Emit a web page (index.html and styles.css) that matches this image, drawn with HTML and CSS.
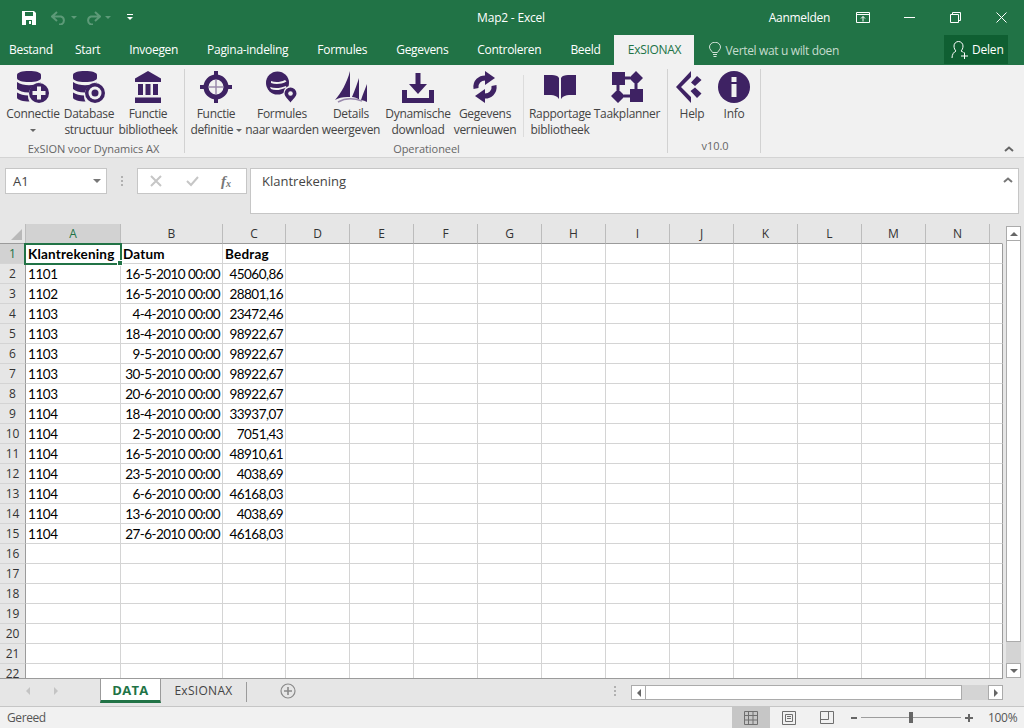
FILE: index.html
```html
<!DOCTYPE html>
<html lang="nl">
<head>
<meta charset="utf-8">
<title>Map2 - Excel</title>
<link rel="stylesheet" href="styles.css">
</head>
<body>
<div class="app">
  <header class="titlebar">
    <div class="qat">
      <svg class="q-save" width="16" height="16" viewBox="0 0 16 16"><path class="w" d="M1 1h12l2 2v12H1z"/><path class="g" d="M4 2h8v4H4zM5 10h6v5H5z"/><path class="w" d="M8 11h2v3H8z"/></svg>
      <svg class="q-undo" width="16" height="14" viewBox="0 0 16 14"><path class="fade" d="M6 1 1 5.500 6 10M1.500 5.500H10a4.200 4.200 0 0 1 0 8H8"/></svg>
      <span class="caret c-fade"></span>
      <svg class="q-redo" width="16" height="14" viewBox="0 0 16 14"><path class="fade" d="M10 1l5 4.500L10 10M14.500 5.500H6a4.200 4.200 0 0 0 0 8h2"/></svg>
      <span class="caret c-fade"></span>
      <span class="q-more"></span>
    </div>
    <div class="doc-title">Map2 - Excel</div>
    <div class="win">
      <span class="signin">Aanmelden</span>
      <svg class="w-display" width="14" height="12" viewBox="0 0 14 12"><path class="ln" d="M.5 .5h13v10H.5zM.5 2.500h13M7 9.500V4.500M5 6.500l2-2 2 2"/></svg>
      <svg class="w-min" width="11" height="11" viewBox="0 0 11 11"><path class="ln" d="M0 5.500h11"/></svg>
      <svg class="w-rest" width="11" height="11" viewBox="0 0 11 11"><path class="ln" d="M.5 2.500h8v8h-8zM2.500 2.500v-2h8v8h-2"/></svg>
      <svg class="w-close" width="11" height="11" viewBox="0 0 11 11"><path class="ln" d="M.5 .5l10 10M10.500 .5l-10 10"/></svg>
    </div>
  </header>

  <nav class="tabs">
    <span class="tab t-file">Bestand</span>
    <span class="tab">Start</span>
    <span class="tab">Invoegen</span>
    <span class="tab">Pagina-indeling</span>
    <span class="tab">Formules</span>
    <span class="tab">Gegevens</span>
    <span class="tab">Controleren</span>
    <span class="tab">Beeld</span>
    <span class="tab active">ExSIONAX</span>
    <span class="tellme">
      <svg width="12" height="16" viewBox="0 0 12 16"><path class="ln2" d="M3.500 10.500C2.500 8.500 .5 7.500 .5 5a5.500 4.800 0 0 1 11 0c0 2.500-2 3.500-3 5.500zM4 12.500h4M4.500 14.500h3"/></svg>
      Vertel wat u wilt doen
    </span>
    <span class="share">
      <svg width="18" height="18" viewBox="0 0 18 18"><path class="ln" d="M1 17c0-4 2-6 4-7-1-1-2-2.500-2-5a4.500 4.500 0 0 1 9 0c0 2.500-1 4-2 5 1 .4 2 1 2.500 1.500M10 15h7M13.500 11.500v6.500"/></svg>
      Delen
    </span>
  </nav>

  <section class="ribbon">
    <div class="group g-a">
      <div class="items">
        <div class="item w60">
          <svg class="ic" viewBox="0 0 32 32"><path d="M0 4C0 1.500 5 0 12 0s12 1.500 12 4v3c0 2.500-5 4-12 4S0 9.500 0 7z"/><path d="M0 11c3 2.500 8 3.200 12 3.200s9-.7 12-3.200v.5C18 12 13 16 12 21.500 6 21.300 2 20 0 18z"/><path d="M0 21.500c3 2 7 3 11 3 0 2 .3 4 1.500 6C6.500 30.500 0 29 0 26.500z"/><circle cx="22" cy="22" r="10"/><path class="hole" d="M20 15.500h4V20h4.500v4H24v4.500h-4V24h-4.500v-4H20z"/></svg>
          <span class="lab">Connectie</span>
          <span class="lab"><i class="caret"></i></span>
        </div>
        <div class="item w52">
          <svg class="ic" viewBox="0 0 32 32"><path d="M0 4C0 1.500 5 0 12 0s12 1.500 12 4v3c0 2.500-5 4-12 4S0 9.500 0 7z"/><path d="M0 11c3 2.500 8 3.200 12 3.200s9-.7 12-3.200v.5C18 12 13 16 12 21.500 6 21.300 2 20 0 18z"/><path d="M0 21.500c3 2 7 3 11 3 0 2 .3 4 1.500 6C6.500 30.500 0 29 0 26.500z"/><circle cx="22" cy="22" r="10"/><circle class="hole" cx="22" cy="22" r="6.500"/><circle cx="22" cy="22" r="3.500"/></svg>
          <span class="lab">Database</span>
          <span class="lab">structuur</span>
        </div>
        <div class="item w66">
          <svg class="ic" viewBox="0 0 32 32"><path d="M16 0l13 7.500V11H3V7.500z"/><path d="M6 13h5v11H6zM13.500 13h5v11h-5zM21 13h5v11h-5zM3 26.500h26V32H3z"/></svg>
          <span class="lab">Functie</span>
          <span class="lab">bibliotheek</span>
        </div>
      </div>
      <div class="glabel">ExSION voor Dynamics AX</div>
    </div>

    <div class="group g-b">
      <div class="items">
        <div class="item w60">
          <svg class="ic" viewBox="0 0 32 32"><path class="thin" d="M16 9v14M9 16h14"/><circle class="ring" cx="16" cy="16" r="10"/><path d="M14 0h4v7h-4zM14 25h4v7h-4zM0 14h7v4H0zM25 14h7v4h-7z"/></svg>
          <span class="lab">Functie</span>
          <span class="lab">definitie <i class="caret"></i></span>
        </div>
        <div class="item w72">
          <svg class="ic" viewBox="0 0 32 32"><circle cx="11.500" cy="12" r="11.500"/><path class="hole" d="M5 10c4 1.500 9 1.500 14-1l1.500 1.500C15 13.500 9 13.500 5 12zM4 16c5 2 11 1 16-1l.5 1.500C15 19 9 20 5 18z"/><path class="pinbg" d="M24.500 15a7 7 0 0 1 7 7c0 4-4.500 7-7 10-2.500-3-7-6-7-10a7 7 0 0 1 7-7z"/><path d="M24.500 16.500a6 6 0 0 1 6 6c0 3-3.800 5.800-6 9-2.200-3.200-6-6-6-9a6 6 0 0 1 6-6z"/><circle class="hole" cx="24.500" cy="22.500" r="2.300"/></svg>
          <span class="lab">Formules</span>
          <span class="lab">naar waarden</span>
        </div>
        <div class="item w66">
          <svg class="ic" viewBox="0 0 32 32"><path d="M0 29C6 22 12 12 15 0v26C9 25.500 4 26.500 0 29zM17 26C20 19 22.500 12 24 7v21.500c-2-1.300-4.500-2.200-7-2.500zM26 29c1.700-5 4-11 6-16v18c-1.700-.9-3.800-1.600-6-2z"/><path class="thin" d="M3 31c7-4 16-4 24-1"/></svg>
          <span class="lab">Details</span>
          <span class="lab">weergeven</span>
        </div>
        <div class="item w68">
          <svg class="ic" viewBox="0 0 32 32"><path d="M0 19h5v8h22v-8h5v13H0zM13.500 2h5v11H25l-9 10-9-10h6.500z"/></svg>
          <span class="lab">Dynamische</span>
          <span class="lab">download</span>
        </div>
        <div class="item w66">
          <svg class="ic" viewBox="0 0 32 32"><path class="arc" d="M7 17.500C6 11 11 6.500 17 7"/><path d="M16 0l10 7-10 7z"/><g class="flip"><path class="arc" d="M7 17.500C6 11 11 6.500 17 7"/><path d="M16 0l10 7-10 7z"/></g></svg>
          <span class="lab">Gegevens</span>
          <span class="lab">vernieuwen</span>
        </div>
        <div class="subsep"></div>
        <div class="item w62">
          <svg class="ic" viewBox="0 0 32 32"><path d="M0 4h8c3 0 6 .7 7 3v21c-2-3-5-4-8-4H0zM32 4h-8c-3 0-6 .7-7 3v21c2-3 5-4 8-4h7z"/></svg>
          <span class="lab">Rapportage</span>
          <span class="lab">bibliotheek</span>
        </div>
        <div class="item w72">
          <svg class="ic" viewBox="0 0 32 32"><path d="M1 1h13v13H1zM25 0l7 7-7 7-7-7zM19 18h13v13H19zM7 18l7 7-7 7-7-7z"/><path d="M14 5.500h5v3h-5zM23.500 13h3v6h-3zM13 23.500h7v3h-7zM5.500 13h3v6h-3z"/></svg>
          <span class="lab">Taakplanner</span>
        </div>
      </div>
      <div class="glabel">Operationeel</div>
    </div>

    <div class="group g-c">
      <div class="items">
        <div class="item w44">
          <svg class="ic" viewBox="0 0 32 32"><path d="M15 0v6L5 16l10 10v6L0 16zM21 5l4.500 4-6.500 6-4-3.500zM19 16.500l6.500 6-4.500 4.500-6.500-7z"/></svg>
          <span class="lab">Help</span>
        </div>
        <div class="item w40">
          <svg class="ic" viewBox="0 0 32 32"><circle cx="16" cy="16" r="16"/><path class="hole" d="M13.500 6h5v5h-5zM13.500 13h5v13h-5z"/></svg>
          <span class="lab">Info</span>
        </div>
      </div>
      <div class="glabel">v10.0</div>
    </div>
    <svg class="collapse" width="10" height="6" viewBox="0 0 10 6"><path d="M1 5l4-3.500L9 5" /></svg>
  </section>

  <section class="fbar">
    <div class="namebox"><span>A1</span><i class="caret c-grey"></i></div>
    <div class="fdots"><i></i><i></i><i></i></div>
    <div class="fbtns">
      <svg width="12" height="12" viewBox="0 0 12 12"><path class="mute" d="M1 1l10 10M11 1L1 11"/></svg>
      <svg width="13" height="12" viewBox="0 0 13 12"><path class="mute" d="M1 6l4 4 7-8"/></svg>
      <span class="fx">f<sub>x</sub></span>
    </div>
    <div class="finput"><span>Klantrekening</span><svg width="10" height="6" viewBox="0 0 10 6"><path class="chev" d="M1 5l4-3.500L9 5"/></svg></div>
  </section>

  <main class="work">
    <div class="sheet">
      <table class="grid">
        <colgroup><col class="c0"><col class="ca"><col class="cb"><col class="cc"><col class="cn"><col class="cn"><col class="cn"><col class="cn"><col class="cn"><col class="cn"><col class="cn"><col class="cn"><col class="cn"><col class="cn"><col class="cn"><col class="cz"></colgroup>
        <thead>
          <tr><th class="corner"><span class="tri"></span></th><th class="sel">A</th><th>B</th><th>C</th><th>D</th><th>E</th><th>F</th><th>G</th><th>H</th><th>I</th><th>J</th><th>K</th><th>L</th><th>M</th><th>N</th><th></th></tr>
        </thead>
        <tbody>
          <tr><th class="sel">1</th><td class="b cur">Klantrekening<i></i></td><td class="b">Datum</td><td class="b">Bedrag</td><td></td><td></td><td></td><td></td><td></td><td></td><td></td><td></td><td></td><td></td><td></td><td></td></tr>
          <tr><th>2</th><td>1101</td><td class="r">16-5-2010 00:00</td><td class="r">45060,86</td><td></td><td></td><td></td><td></td><td></td><td></td><td></td><td></td><td></td><td></td><td></td><td></td></tr>
          <tr><th>3</th><td>1102</td><td class="r">16-5-2010 00:00</td><td class="r">28801,16</td><td></td><td></td><td></td><td></td><td></td><td></td><td></td><td></td><td></td><td></td><td></td><td></td></tr>
          <tr><th>4</th><td>1103</td><td class="r">4-4-2010 00:00</td><td class="r">23472,46</td><td></td><td></td><td></td><td></td><td></td><td></td><td></td><td></td><td></td><td></td><td></td><td></td></tr>
          <tr><th>5</th><td>1103</td><td class="r">18-4-2010 00:00</td><td class="r">98922,67</td><td></td><td></td><td></td><td></td><td></td><td></td><td></td><td></td><td></td><td></td><td></td><td></td></tr>
          <tr><th>6</th><td>1103</td><td class="r">9-5-2010 00:00</td><td class="r">98922,67</td><td></td><td></td><td></td><td></td><td></td><td></td><td></td><td></td><td></td><td></td><td></td><td></td></tr>
          <tr><th>7</th><td>1103</td><td class="r">30-5-2010 00:00</td><td class="r">98922,67</td><td></td><td></td><td></td><td></td><td></td><td></td><td></td><td></td><td></td><td></td><td></td><td></td></tr>
          <tr><th>8</th><td>1103</td><td class="r">20-6-2010 00:00</td><td class="r">98922,67</td><td></td><td></td><td></td><td></td><td></td><td></td><td></td><td></td><td></td><td></td><td></td><td></td></tr>
          <tr><th>9</th><td>1104</td><td class="r">18-4-2010 00:00</td><td class="r">33937,07</td><td></td><td></td><td></td><td></td><td></td><td></td><td></td><td></td><td></td><td></td><td></td><td></td></tr>
          <tr><th>10</th><td>1104</td><td class="r">2-5-2010 00:00</td><td class="r">7051,43</td><td></td><td></td><td></td><td></td><td></td><td></td><td></td><td></td><td></td><td></td><td></td><td></td></tr>
          <tr><th>11</th><td>1104</td><td class="r">16-5-2010 00:00</td><td class="r">48910,61</td><td></td><td></td><td></td><td></td><td></td><td></td><td></td><td></td><td></td><td></td><td></td><td></td></tr>
          <tr><th>12</th><td>1104</td><td class="r">23-5-2010 00:00</td><td class="r">4038,69</td><td></td><td></td><td></td><td></td><td></td><td></td><td></td><td></td><td></td><td></td><td></td><td></td></tr>
          <tr><th>13</th><td>1104</td><td class="r">6-6-2010 00:00</td><td class="r">46168,03</td><td></td><td></td><td></td><td></td><td></td><td></td><td></td><td></td><td></td><td></td><td></td><td></td></tr>
          <tr><th>14</th><td>1104</td><td class="r">13-6-2010 00:00</td><td class="r">4038,69</td><td></td><td></td><td></td><td></td><td></td><td></td><td></td><td></td><td></td><td></td><td></td><td></td></tr>
          <tr><th>15</th><td>1104</td><td class="r">27-6-2010 00:00</td><td class="r">46168,03</td><td></td><td></td><td></td><td></td><td></td><td></td><td></td><td></td><td></td><td></td><td></td><td></td></tr>
          <tr><th>16</th><td></td><td></td><td></td><td></td><td></td><td></td><td></td><td></td><td></td><td></td><td></td><td></td><td></td><td></td><td></td></tr>
          <tr><th>17</th><td></td><td></td><td></td><td></td><td></td><td></td><td></td><td></td><td></td><td></td><td></td><td></td><td></td><td></td><td></td></tr>
          <tr><th>18</th><td></td><td></td><td></td><td></td><td></td><td></td><td></td><td></td><td></td><td></td><td></td><td></td><td></td><td></td><td></td></tr>
          <tr><th>19</th><td></td><td></td><td></td><td></td><td></td><td></td><td></td><td></td><td></td><td></td><td></td><td></td><td></td><td></td><td></td></tr>
          <tr><th>20</th><td></td><td></td><td></td><td></td><td></td><td></td><td></td><td></td><td></td><td></td><td></td><td></td><td></td><td></td><td></td></tr>
          <tr><th>21</th><td></td><td></td><td></td><td></td><td></td><td></td><td></td><td></td><td></td><td></td><td></td><td></td><td></td><td></td><td></td></tr>
          <tr><th>22</th><td></td><td></td><td></td><td></td><td></td><td></td><td></td><td></td><td></td><td></td><td></td><td></td><td></td><td></td><td></td></tr>
        </tbody>
      </table>
    </div>
    <div class="vscroll">
      <div class="sb-btn"><i class="ar-up"></i></div>
      <div class="sb-thumb"></div>
      <div class="sb-track"></div>
      <div class="sb-btn"><i class="ar-down"></i></div>
    </div>
  </main>

  <section class="sheetbar">
    <div class="nav"><i class="nl"></i><i class="nr"></i></div>
    <div class="stab on">DATA</div>
    <div class="stab">ExSIONAX</div>
    <div class="stab-sep"></div>
    <svg class="addsheet" width="16" height="16" viewBox="0 0 16 16"><circle class="addc" cx="8" cy="8" r="7"/><path class="addp" d="M8 4v8M4 8h8"/></svg>
    <div class="fdots sb-dots"><i></i><i></i><i></i></div>
    <div class="hscroll">
      <div class="sb-btn"><i class="ar-left"></i></div>
      <div class="sb-thumb"></div>
      <div class="sb-track"></div>
      <div class="sb-btn"><i class="ar-right"></i></div>
    </div>
  </section>

  <footer class="status">
    <span class="ready">Gereed</span>
    <div class="views">
      <span class="view on"><svg width="14" height="14" viewBox="0 0 14 14"><path class="vw" d="M.5 .5h13v13H.5zM.5 4.500h13M.5 9h13M4.500 .5v13M9 .5v13"/></svg></span>
      <span class="view"><svg width="14" height="14" viewBox="0 0 14 14"><path class="vw" d="M.5 .5h13v13H.5zM3.500 3.500h7v7h-7zM5 5.500h4M5 7.500h4"/></svg></span>
      <span class="view"><svg width="14" height="13" viewBox="0 0 14 13"><path class="vw" d="M.5 .5h13v12H.5zM.5 8.500h8v-8"/></svg></span>
    </div>
    <div class="zoom">
      <i class="z-minus"></i>
      <div class="z-line"><i class="z-thumb"></i></div>
      <i class="z-plus"></i>
    </div>
    <span class="pct">100%</span>
  </footer>
</div>
</body>
</html>
```
FILE: styles.css
```css
* { box-sizing: border-box; }
html, body { margin: 0; padding: 0; }
body { width: 1024px; height: 728px; overflow: hidden; background: #e6e6e6; font-family: "Open Sans", "Noto Sans", sans-serif; font-size: 12px; color: #444; }
.app { display: flex; flex-direction: column; width: 1024px; height: 728px; }

/* title bar */
.titlebar { flex: 0 0 35px; display: flex; align-items: center; background: #217346; color: #fff; position: relative; }
.qat { display: flex; align-items: center; padding-left: 21px; width: 300px; }
.qat .w { fill: #fff; }
.qat .g { fill: #217346; }
.fade { fill: none; stroke: #5d9a78; stroke-width: 2; }
.q-undo { margin-left: 14px; }
.q-redo { margin-left: 8px; }
.caret { display: inline-block; width: 0; height: 0; border-left: 3px solid transparent; border-right: 3px solid transparent; border-top: 3px solid #666; vertical-align: middle; }
.c-fade { border-top-color: #5d9a78; margin-left: 4px; }
.q-more { margin-left: 16px; width: 6px; height: 7px; border-top: 1px solid #fff; position: relative; }
.q-more::after { content: ""; position: absolute; left: 0; top: 2px; border-left: 3px solid transparent; border-right: 3px solid transparent; border-top: 3px solid #fff; }
.doc-title { position: absolute; left: 0; right: 2px; top: 9px; text-align: center; letter-spacing: -.2px; }
.win { margin-left: auto; display: flex; align-items: center; padding-right: 17px; }
.signin { margin-right: 26px; letter-spacing: -.3px; }
.ln { fill: none; stroke: #fff; stroke-width: 1; }
.ln2 { fill: none; stroke: #d3e3d9; stroke-width: 1; }
.w-min { margin-left: 34px; }
.w-rest { margin-left: 35px; }
.w-close { margin-left: 35px; }

/* tabs */
.tabs { flex: 0 0 30px; display: flex; background: #217346; color: #fff; }
.tab { padding: 0 14.5px; line-height: 30px; letter-spacing: -.3px; }
.t-file { width: 60.5px; padding: 0 0 0 9px; }
.tab.active { background: #f1f1f1; color: #217346; margin-left: -.5px; width: 80px; padding: 0; text-align: center; }
.tellme { display: flex; align-items: center; gap: 4px; margin-left: 15px; color: #c6dcce; letter-spacing: -.35px; }
.share { display: flex; align-items: center; gap: 3px; margin-left: auto; margin-right: 16px; width: 64px; height: 29px; padding-left: 7px; background: #0f5f32; letter-spacing: -.2px; }

/* ribbon */
.ribbon { flex: 0 0 93px; display: flex; background: #f1f1f1; border-bottom: 1px solid #d4d4d4; position: relative; padding: 4px 0 3px 3px; }
.group { display: flex; flex-direction: column; border-right: 1px solid #d2d2d2; margin-right: 1px; height: 84px; }
.g-a { width: 182px; }
.g-b { width: 482px; }
.g-c { width: 92px; padding-left: 1px; }
.items { display: flex; height: 70px; }
.item { display: flex; flex-direction: column; align-items: center; padding-top: 2px; letter-spacing: -.3px; white-space: nowrap; }
.w40 { width: 40px; } .w44 { width: 44px; } .w52 { width: 52px; } .w60 { width: 60px; } .w62 { width: 62px; } .w66 { width: 66px; } .w68 { width: 68px; } .w72 { width: 72px; }
.ic { width: 32px; height: 32px; fill: #3e2263; margin-bottom: 3px; flex: none; }
.lab { line-height: 16px; height: 16px; word-spacing: -.5px; }
.glabel { text-align: center; color: #666; font-size: 11px; line-height: 14px; margin-top: 4px; letter-spacing: -.05px; }
.hole { fill: #f1f1f1; }
.pinbg { fill: #f1f1f1; }
.thin { fill: none; stroke: #9a8aac; stroke-width: 1.500; }
.ring { fill: none; stroke: #3e2263; stroke-width: 5; }
.arc { fill: none; stroke: #3e2263; stroke-width: 5; }
.flip { transform: rotate(180deg); transform-origin: 16px 16px; }
.subsep { width: 1px; height: 62px; margin: 6px 5px 0 5px; background: #dcdcdc; }
.collapse { position: absolute; right: 10px; bottom: 5px; fill: none; stroke: #666; stroke-width: 2; }

/* formula bar */
.fbar { flex: 0 0 66px; display: flex; align-items: flex-start; padding: 10px 5px 0; background: #e6e6e6; }
.namebox { width: 102px; height: 26px; background: #fff; border: 1px solid #c6c6c6; display: flex; align-items: center; justify-content: space-between; padding: 0 5px 0 7px; font-size: 13px; }
.c-grey { border-left-width: 4px; border-right-width: 4px; border-top-width: 4px; border-top-color: #777; }
.fdots { width: 30px; height: 26px; display: flex; flex-direction: column; align-items: center; justify-content: center; gap: 2px; }
.fdots i { width: 2px; height: 2px; background: #b1b1b1; }
.fbtns { width: 110px; height: 26px; background: #fff; border: 1px solid #c6c6c6; display: flex; align-items: center; padding-left: 12px; gap: 24px; }
.mute { fill: none; stroke: #c6c6c6; stroke-width: 2; }
.fx { font-family: "Liberation Serif", serif; font-style: italic; font-weight: bold; font-size: 15px; line-height: 16px; color: #777; margin-left: -2px; }
.fx sub { font-size: 10px; vertical-align: -1px; line-height: 0; }
.finput { margin-left: 3px; width: 769px; height: 46px; background: #fff; border: 1px solid #c6c6c6; display: flex; justify-content: space-between; padding: 4px 5px 0 11px; font-size: 13px; line-height: 17px; color: #444; }
.finput svg { margin-top: 4px; }
.chev { fill: none; stroke: #777; stroke-width: 2; }

/* sheet */
.work { flex: 0 0 455px; display: flex; background: #e6e6e6; }
.sheet { width: 1003px; height: 455px; overflow: hidden; border-bottom: 1px solid #9b9b9b; }
.grid { table-layout: fixed; width: 1003px; border-collapse: separate; border-spacing: 0; font-family: Lato, "Liberation Sans", sans-serif; font-size: 13.5px; color: #000; }
.c0 { width: 26px; } .ca { width: 95px; } .cb { width: 102px; } .cc { width: 63px; } .cn { width: 64px; } .cz { width: 13px; }
.grid th { height: 20px; padding: 0; font-weight: 400; background: #e6e6e6; color: #333; font-family: "Open Sans", sans-serif; font-size: 12px; border-right: 1px solid #bcbcbc; text-align: center; border-bottom: 1px solid #d4d4d4; }
.grid thead th { border-bottom: 1px solid #9b9b9b; }
.grid thead th:last-child { border-right: 1px solid #e6e6e6; background: #e6e6e6; }
.grid tbody th { border-right: 1px solid #9b9b9b; font-size: 12px; }
.grid th.sel { background: #d2d2d2; color: #217346; }
.grid td { height: 20px; padding: 0 2px; background: #fff; border-right: 1px solid #d4d4d4; border-bottom: 1px solid #d4d4d4; white-space: nowrap; overflow: visible; letter-spacing: -.4px; }
.grid td:last-child { border-right: 1px solid #9b9b9b; }
.grid td.b { font-weight: 700; letter-spacing: .2px; }
.grid td.r { text-align: right; letter-spacing: -.55px; }
.corner { position: relative; }
.tri { position: absolute; right: 3px; bottom: 3px; border-left: 11px solid transparent; border-bottom: 11px solid #b9b9b9; }
.cur { position: relative; }
.cur::after { content: ""; position: absolute; left: -2px; top: -1px; right: -2px; bottom: -2px; border: 2px solid #217346; }
.cur i { position: absolute; right: -3px; bottom: -3px; width: 6px; height: 6px; background: #217346; border: 1px solid #fff; z-index: 1; }

.vscroll { width: 15px; margin: 2px 0 0 3px; display: flex; flex-direction: column; height: 452px; }
.sb-btn { flex: none; width: 15px; height: 15px; background: #fff; border: 1px solid #ababab; display: flex; align-items: center; justify-content: center; }
.sb-thumb { background: #fff; border: 1px solid #ababab; border-top: 0; }
.vscroll .sb-thumb { height: 401px; }
.sb-track { flex: 1; background: #d4d4d4; }
.ar-up { border-left: 4px solid transparent; border-right: 4px solid transparent; border-bottom: 4px solid #666; }
.ar-down { border-left: 4px solid transparent; border-right: 4px solid transparent; border-top: 4px solid #666; }
.ar-left { border-top: 4px solid transparent; border-bottom: 4px solid transparent; border-right: 4px solid #666; }
.ar-right { border-top: 4px solid transparent; border-bottom: 4px solid transparent; border-left: 4px solid #666; }

/* sheet tabs */
.sheetbar { flex: 0 0 27px; display: flex; align-items: flex-start; background: #e6e6e6; }
.nav { width: 100px; height: 23px; display: flex; align-items: center; padding-left: 26px; gap: 24px; }
.nl { border-top: 4px solid transparent; border-bottom: 4px solid transparent; border-right: 4px solid #c4c4c4; }
.nr { border-top: 4px solid transparent; border-bottom: 4px solid transparent; border-left: 4px solid #c4c4c4; }
.stab { height: 23px; line-height: 23px; width: 85px; text-align: center; color: #444; letter-spacing: .3px; }
.stab.on { width: 61px; background: #fff; color: #217346; font-weight: 700; font-size: 13px; border-left: 1px solid #9b9b9b; border-right: 1px solid #9b9b9b; border-bottom: 3px solid #217346; line-height: 23px; height: 24px; }
.stab-sep { width: 1px; height: 20px; margin-top: 3px; background: #9b9b9b; }
.addsheet { margin: 4px 0 0 33px; }
.addc { fill: none; stroke: #8a8a8a; stroke-width: 1.200; }
.addp { fill: none; stroke: #8a8a8a; stroke-width: 1.600; }
.sb-dots { margin-left: 304px; height: 22px; margin-top: 1px; }
.hscroll { display: flex; height: 15px; width: 372px; margin: 6px 0 0 1px; }
.hscroll .sb-thumb { width: 316px; border-top: 1px solid #ababab; border-left: 0; }

/* status */
.status { flex: 0 0 22px; display: flex; align-items: center; background: #f1f1f1; border-top: 1px solid #c6c6c6; color: #555; }
.ready { padding-left: 7px; letter-spacing: -.4px; }
.views { margin-left: auto; display: flex; height: 21px; }
.view { width: 38px; display: flex; align-items: center; justify-content: center; }
.view.on { background: #c6c6c6; }
.vw { fill: none; stroke: #6f6f6f; stroke-width: 1; }
.zoom { display: flex; align-items: center; margin-left: 5px; }
.z-minus { width: 6px; height: 2px; background: #666; }
.z-line { position: relative; width: 100px; height: 1px; background: #9d9d9d; margin: 0 4px; }
.z-thumb { position: absolute; left: 48px; top: -5px; width: 4px; height: 11px; background: #666; }
.z-plus { width: 8px; height: 8px; background: linear-gradient(#666, #666) center / 8px 2px no-repeat, linear-gradient(#666, #666) center / 2px 8px no-repeat; }
.pct { width: 27px; margin: 0 9px 0 15px; letter-spacing: -.3px; white-space: nowrap; }
```
